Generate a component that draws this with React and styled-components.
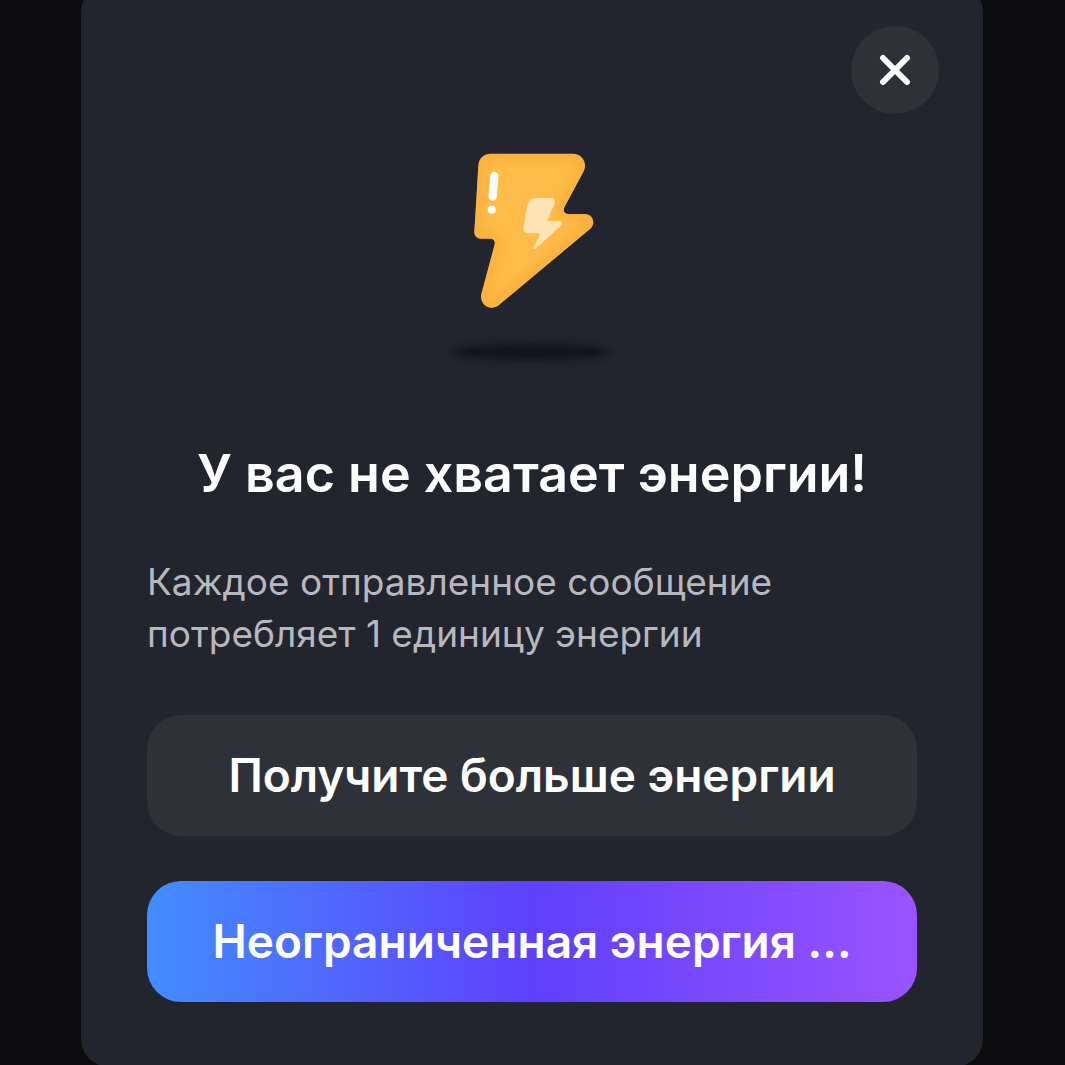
import React, { useState } from "react"
import styled, { createGlobalStyle } from "styled-components"

const GlobalStyle = createGlobalStyle`
  * {
    box-sizing: border-box;
  }

  body {
    margin: 0;
    background-color: #0c0c0e;
    font-family: Inter, "Liberation Sans", sans-serif;
  }
`

const Overlay = styled.main`
  display: flex;
  align-items: center;
  justify-content: center;
  min-height: 100vh;
  padding: 0 82px 0 81px;
  overflow: hidden;
`

const Modal = styled.section`
  flex: 1;
  margin: -16px 0 -2px;
  padding: 42px 44px 65px;
  border-radius: 28px;
  background-color: #22242e;
`

const ModalHeader = styled.header`
  display: flex;
  justify-content: flex-end;
`

const CloseButton = styled.button`
  display: flex;
  align-items: center;
  justify-content: center;
  width: 88px;
  height: 88px;
  padding: 0;
  border: none;
  border-radius: 50%;
  background-color: #2f3139;
  cursor: pointer;
`

const ModalBody = styled.div`
  display: flex;
  flex-direction: column;
  padding: 16px 22px 0;
`

const Illustration = styled.svg`
  display: block;
  align-self: center;
`

const Title = styled.h1`
  margin: 64px 0 0;
  font-size: 52px;
  font-weight: 600;
  line-height: 60px;
  text-align: center;
  color: #fff;
`

const Description = styled.p`
  margin: 52px 0 0;
  font-size: 37px;
  line-height: 52px;
  color: #b7b8be;
`

const Actions = styled.div`
  display: flex;
  flex-direction: column;
  gap: 45px;
  margin-top: 55px;
`

const ActionButton = styled.button`
  width: 100%;
  padding: 34px 24px;
  border: none;
  border-radius: 34px;
  background: ${(props) =>
    props.$primary
      ? "linear-gradient(90deg, #428dff 0%, #5e40fb 50%, #9a53ff 100%)"
      : "#2f3139"};
  font-family: inherit;
  font-size: 46px;
  font-weight: 600;
  line-height: 53px;
  text-align: center;
  white-space: nowrap;
  color: #fff;
  cursor: pointer;
`

const CloseIcon = () => (
  <svg width="32" height="32" viewBox="0 0 32 32" fill="none" aria-hidden="true">
    <path
      d="M4 4L28 28M28 4L4 28"
      stroke="#fff"
      strokeWidth="6"
      strokeLinecap="round"
    />
  </svg>
)

const EnergyBolt = () => (
  <Illustration width="210" height="250" viewBox="-7 0 630 750" aria-hidden="true">
    <defs>
      <filter
        id="shadowBlur"
        x="-20%"
        y="-80%"
        width="140%"
        height="260%"
        colorInterpolationFilters="sRGB"
      >
        <feGaussianBlur stdDeviation="11" />
      </filter>
      <filter
        id="edgeBlur"
        x="-20%"
        y="-20%"
        width="140%"
        height="140%"
        colorInterpolationFilters="sRGB"
      >
        <feGaussianBlur stdDeviation="20" />
      </filter>
      <path
        id="bolt"
        d="M184 71H430C460 71 476 101 462 126L405 232C400 242 406 252 418 252H466C491 252 501 281 482 297L208 526C184 545 149 524 156 492L196 343C198 333 193 326 183 326H155C142 326 134 317 135 304L147 108C148 86 162 71 184 71Z"
      />
      <clipPath id="boltClip">
        <use href="#bolt" />
      </clipPath>
    </defs>
    <ellipse cx="305" cy="666" rx="240" ry="24" fill="#11131d" filter="url(#shadowBlur)" />
    <use href="#bolt" fill="#febc48" />
    <g clipPath="url(#boltClip)">
      <use
        href="#bolt"
        fill="none"
        stroke="#f6a636"
        strokeWidth="28"
        strokeOpacity="0.8"
        filter="url(#edgeBlur)"
      />
    </g>
    <path d="M195 138L190 200" stroke="#fff" strokeWidth="25" strokeLinecap="round" />
    <circle cx="187" cy="239" r="12" fill="#fff" />
    <path
      d="M320 204H365C375 204 379 212 376 221L356 266C354 271 356 273 361 273H388C399 273 401 282 393 289L318 356C314 359 311 357 313 352L330 317C332 312 330 310 325 310H296C286 310 281 303 282 294L293 233C297 213 305 204 320 204Z"
      fill="#ffe5b5"
    />
  </Illustration>
)

export default function App() {
  const [isOpen, setIsOpen] = useState(true)

  const handleClose = () => {
    setIsOpen(false)
  }

  return (
    <>
      <GlobalStyle />
      <Overlay>
        {isOpen && (
          <Modal role="dialog" aria-labelledby="energy-title">
            <ModalHeader>
              <CloseButton type="button" aria-label="Закрыть" onClick={handleClose}>
                <CloseIcon />
              </CloseButton>
            </ModalHeader>

            <ModalBody>
              <EnergyBolt />
              <Title id="energy-title">У вас не хватает энергии!</Title>
              <Description>
                Каждое отправленное сообщение <br />
                потребляет 1 единицу энергии
              </Description>

              <Actions>
                <ActionButton type="button">Получите больше энергии</ActionButton>
                <ActionButton type="button" $primary>
                  Неограниченная энергия ...
                </ActionButton>
              </Actions>
            </ModalBody>
          </Modal>
        )}
      </Overlay>
    </>
  )
}
